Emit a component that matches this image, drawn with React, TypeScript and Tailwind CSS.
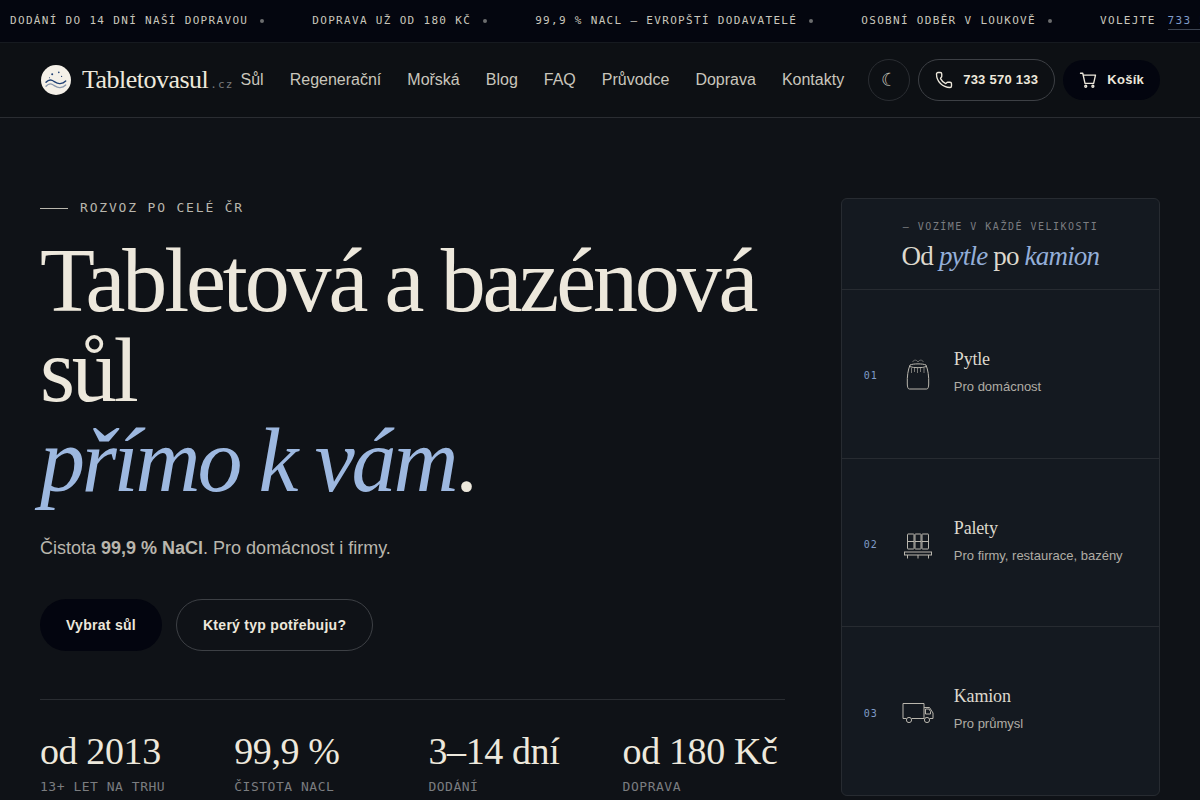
import type { ReactNode } from 'react'
import { Phone } from 'lucide-react'

const navLinks = [
  'Sůl',
  'Regenerační',
  'Mořská',
  'Blog',
  'FAQ',
  'Průvodce',
  'Doprava',
  'Kontakty',
]

const tickerItems = [
  'Dodání do 14 dní naší dopravou',
  'Doprava už od 180 Kč',
  '99,9 % NaCl — evropští dodavatelé',
  'Osobní odběr v Loukově',
]

const stats = [
  { value: 'od 2013', label: '13+ let na trhu' },
  { value: '99,9 %', label: 'Čistota NaCl' },
  { value: '3–14 dní', label: 'Dodání' },
  { value: 'od 180 Kč', label: 'Doprava' },
]

interface Size {
  number: string
  title: string
  note: string
  icon: ReactNode
}

const sizes: Size[] = [
  { number: '01', title: 'Pytle', note: 'Pro domácnost', icon: <BagIcon /> },
  {
    number: '02',
    title: 'Palety',
    note: 'Pro firmy, restaurace, bazény',
    icon: <PalletIcon />,
  },
  { number: '03', title: 'Kamion', note: 'Pro průmysl', icon: <TruckIcon /> },
]

function Logo() {
  return (
    <svg viewBox="0 0 32 32" className="size-8" fill="none" aria-hidden="true">
      <circle cx="16" cy="16" r="15" fill="#f4f0e8" />
      <g fill="#1f3f73">
        <circle cx="12.2" cy="10.3" r="1" />
        <circle cx="18.8" cy="8.4" r="0.8" />
        <circle cx="21.6" cy="12.4" r="0.6" />
        <circle cx="9.5" cy="13.8" r="0.5" />
      </g>
      <path
        d="M6 18.3c2-2.200 4.200-3 6.500-1.800s4.500 3.400 7.500 3.100 4.500-1.400 5.700-2.600"
        stroke="#1f3f73"
        strokeWidth="1.4"
        strokeLinecap="round"
      />
      <path
        d="M6 22.300c2-2.200 4.200-3 6.500-1.800s4.500 3.400 7.500 3.100 4.500-1.400 5.700-2.600"
        stroke="#1f3f73"
        strokeOpacity="0.5"
        strokeWidth="1.3"
        strokeLinecap="round"
      />
    </svg>
  )
}

function CartIcon() {
  return (
    <svg
      viewBox="0 0 24 24"
      className="size-[18px]"
      fill="none"
      stroke="currentColor"
      strokeWidth="1.8"
      strokeLinecap="round"
      strokeLinejoin="round"
      aria-hidden="true"
    >
      <path d="M2 3h3l3 13.500h11.500L22 5.500H5.600" />
      <circle cx="9" cy="20.300" r="1.300" />
      <circle cx="18.500" cy="20.300" r="1.300" />
    </svg>
  )
}

function BagIcon() {
  return (
    <svg viewBox="0 0 36 36" className="size-9" fill="none" stroke="currentColor" aria-hidden="true">
      <path d="M10 9C8 14 7 20 7.300 28c.1 3 .6 5 2 5h17.400c1.400 0 1.900-2 2-5C29 20 28 14 26 9" />
      <path d="M10 9c3-1.500 13-1.500 16 0M9.500 10.500c4 1.600 13 1.600 17 0" />
      <path d="M12.500 6c1.500-2.500 4-2.500 5.500 0 1.500-2.500 4-2.500 5.500 0" strokeOpacity="0.5" />
      <path d="M11.500 12v5M14.500 12v4M17.500 12v5M20.500 12v4M24 12v5" strokeOpacity="0.6" />
    </svg>
  )
}

function PalletIcon() {
  return (
    <svg viewBox="0 0 36 36" className="size-9" fill="none" stroke="currentColor" aria-hidden="true">
      <rect x="7.500" y="9" width="6.500" height="15" rx="0.5" />
      <rect x="15" y="9" width="6" height="15" rx="0.5" />
      <rect x="22" y="9" width="6.500" height="15" rx="0.5" />
      <path d="M7.500 16.500h6.500M15 16.500h6M22 16.500h6.500" />
      <rect x="4.500" y="27" width="27" height="3" />
      <path d="M7.500 30v3.500M18 30v3.500M28.500 30v3.500" />
    </svg>
  )
}

function TruckIcon() {
  return (
    <svg viewBox="0 0 36 36" className="size-9" fill="none" stroke="currentColor" aria-hidden="true">
      <path d="M6.300 25.500H3v-15h21v15H11.700" />
      <path d="M24 14.500h5.500l3.500 5.500v5.500h-3.300" />
      <path d="M25.500 16h3.500l1.500 2.500v2.500h-5z" />
      <circle cx="9" cy="27" r="2.600" />
      <circle cx="27" cy="27" r="2.600" />
    </svg>
  )
}

function Ticker() {
  return (
    <div className="overflow-hidden border-b border-[#161a20] bg-[#04060f]">
      <div className="flex items-center gap-12 py-2.5 pl-2.5 font-['DejaVu_Sans_Mono',monospace] text-[11px] leading-[22px] tracking-[0.12em] whitespace-nowrap text-[#c9c6bc] uppercase">
        {tickerItems.map((item) => (
          <span key={item} className="flex items-center gap-3">
            {item}
            <span className="size-1 rounded-full bg-[#6c6d6e]" />
          </span>
        ))}
        <span className="flex items-center gap-3">
          Volejte
          <a href="tel:+420733570133" className="border-b border-[#3d4452] leading-4 text-[#7f9bc8]">
            733 570 133
          </a>
        </span>
      </div>
    </div>
  )
}

function Header() {
  return (
    <header className="border-b border-[#2a2d32] bg-[#0d1014]">
      <div className="flex h-[74px] items-center justify-between px-10">
        <a href="#" className="flex flex-none items-center gap-2.5">
          <Logo />
          <span className="flex items-baseline gap-0.5">
            <span className="font-['Liberation_Serif',serif] text-[26px] leading-9 tracking-[-0.02em]">
              Tabletovasul
            </span>
            <span className="font-['DejaVu_Sans_Mono',monospace] text-[11px] leading-4 tracking-widest text-[#77797b]">
              .cz
            </span>
          </span>
        </a>

        <div className="flex flex-none items-center gap-6">
          <nav className="flex gap-[26px] text-base text-[#c9c6bc]">
            {navLinks.map((link) => (
              <a key={link} href="#">
                {link}
              </a>
            ))}
          </nav>

          <div className="flex items-center gap-2">
            <button
              type="button"
              aria-label="Přepnout motiv"
              className="size-[42px] rounded-full border border-[#2a2d32] text-lg text-[#c9c6bc]"
            >
              ☾
            </button>
            <a
              href="tel:+420733570133"
              className="flex h-[42px] items-center gap-2.5 rounded-full border border-[#3d4045] px-4 text-[13px] font-bold tracking-[0.02em] whitespace-nowrap"
            >
              <Phone size={18} strokeWidth={1.8} />
              733 570 133
            </a>
            <button
              type="button"
              className="flex h-10 items-center gap-2.5 rounded-full bg-[#03050f] px-4 text-[13px] font-bold tracking-[0.02em]"
            >
              <CartIcon />
              Košík
            </button>
          </div>
        </div>
      </div>
    </header>
  )
}

function SizesCard() {
  return (
    <aside className="flex flex-col rounded-md border border-[#272b31] bg-[#141920]">
      <div className="border-b border-[#272b31] px-5 pt-5 pb-[18px] text-center">
        <p className="font-['DejaVu_Sans_Mono',monospace] text-[10px] leading-4 tracking-[0.15em] text-[#7b7d80] uppercase">
          — Vozíme v každé velikosti
        </p>
        <h2 className="mt-1.5 font-['Liberation_Serif',serif] text-[27px] leading-[30px] tracking-[-0.03em] text-[#ddd8cd]">
          Od <em className="text-[#93aed8]">pytle</em> po <em className="text-[#93aed8]">kamion</em>
        </h2>
      </div>

      {sizes.map((size) => (
        <a
          key={size.number}
          href="#"
          className="flex flex-1 items-center gap-[18px] border-b border-[#272b31] px-[22px] last:border-b-0"
        >
          <span className="w-[18px] pt-1 font-['DejaVu_Sans_Mono',monospace] text-[10px] tracking-widest text-[#7f9bc8]">
            {size.number}
          </span>
          <span className="flex-none text-[#b9b6ad]">{size.icon}</span>
          <span>
            <span className="block font-['Liberation_Serif',serif] text-lg leading-[18px] tracking-[-0.01em] text-[#ddd8cd]">
              {size.title}
            </span>
            <span className="mt-2 block text-[13px] leading-[22px] text-[#b0ada5]">
              {size.note}
            </span>
          </span>
        </a>
      ))}
    </aside>
  )
}

export default function App() {
  return (
    <div className="min-h-screen bg-[#0f1217] font-['Liberation_Sans',Arial,sans-serif] text-[#ede8dc]">
      <Ticker />
      <Header />

      <main className="grid grid-cols-[7fr_3fr] gap-14 px-10 pt-20">
        <section>
          <p className="mb-[18px] flex items-center gap-3 font-['DejaVu_Sans_Mono',monospace] text-[13px] leading-5 tracking-[0.14em] text-[#b9b6ad] uppercase">
            <span className="h-px w-7 bg-[#b9b6ad]" />
            Rozvoz po celé ČR
          </p>

          <h1 className="mb-[27px] font-['Liberation_Serif',serif] text-[90px] leading-[90px] tracking-[-0.035em]">
            Tabletová a bazénová sůl
            <br />
            <em className="text-[#9db8e0]">přímo k vám</em>.
          </h1>

          <p className="mb-9 text-lg leading-[30px] text-[#b9b6ad]">
            Čistota <strong>99,9 % NaCl</strong>. Pro domácnost i firmy.
          </p>

          <div className="flex gap-3.5 text-sm font-bold tracking-[0.02em]">
            <button type="button" className="h-[52px] rounded-full bg-[#03050f] px-[26px]">
              Vybrat sůl
            </button>
            <button
              type="button"
              className="h-[52px] rounded-full border border-[#3d4045] px-[26px]"
            >
              Který typ potřebuju?
            </button>
          </div>

          <dl className="mt-12 grid grid-cols-4 gap-8 border-t border-[#2a2d32] pt-8">
            {stats.map((stat) => (
              <div key={stat.label} className="flex flex-col-reverse gap-2">
                <dt className="font-['DejaVu_Sans_Mono',monospace] text-[13px] leading-[18px] tracking-[0.04em] whitespace-nowrap text-[#7b7d80] uppercase">
                  {stat.label}
                </dt>
                <dd className="font-['Liberation_Serif',serif] text-[38px] leading-[38px] tracking-[-0.01em] whitespace-nowrap">
                  {stat.value}
                </dd>
              </div>
            ))}
          </dl>
        </section>

        <SizesCard />
      </main>
    </div>
  )
}
